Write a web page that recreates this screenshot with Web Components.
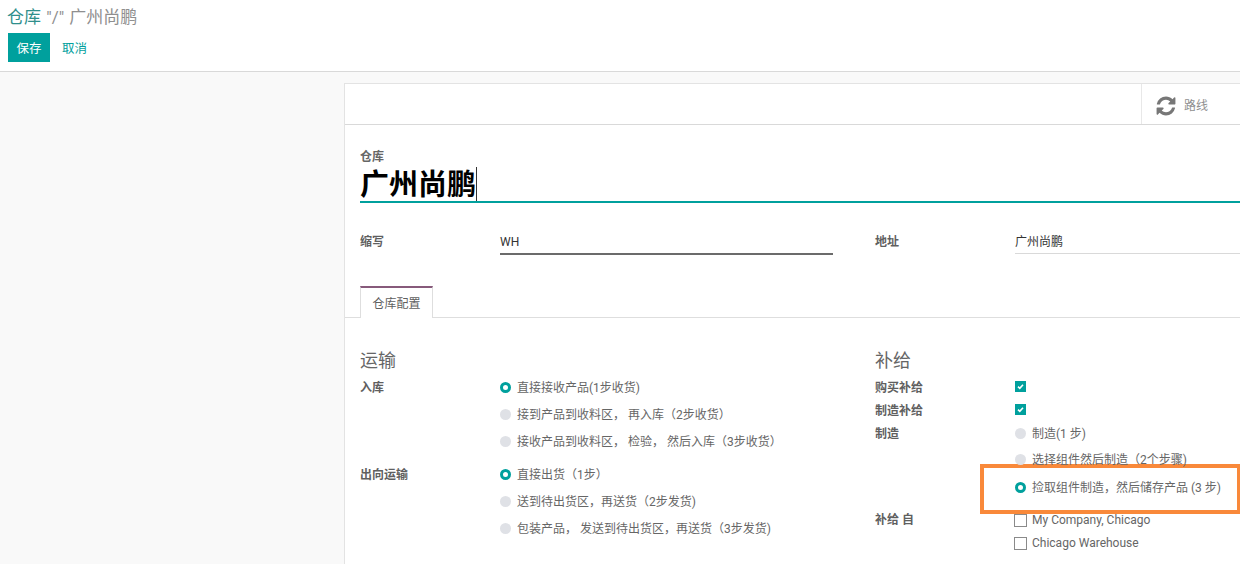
<!DOCTYPE html>
<html lang="zh">
<head>
<meta charset="utf-8">
<title>仓库</title>
<style>
	html, body { margin: 0; height: 564px; overflow: hidden; background: #f9f9f9; }
	body { font: 12px/18px Roboto, "Noto Sans CJK SC", sans-serif; color: #4c4c4c; }
</style>
</head>
<body>
<wh-panel>
	<span slot="crumb">仓库</span>
	<span slot="title">"/" 广州尚鹏</span>
</wh-panel>
<wh-sheet>
	<wh-name label="仓库" value="广州尚鹏"></wh-name>
	<wh-columns slot="fields" style="--top:24px">
		<wh-field label="缩写" value="WH" strong></wh-field>
		<wh-field slot="right" label="地址" value="广州尚鹏"></wh-field>
	</wh-columns>
	<wh-tab slot="tab">仓库配置</wh-tab>
	<wh-columns slot="config">
		<div>
			<wh-section>运输</wh-section>
			<wh-row label="入库" height="27"><wh-radio checked>直接接收产品(1步收货)</wh-radio></wh-row>
			<wh-row height="27"><wh-radio>接到产品到收料区， 再入库（2步收货）</wh-radio></wh-row>
			<wh-row height="33"><wh-radio>接收产品到收料区， 检验， 然后入库（3步收货）</wh-radio></wh-row>
			<wh-row label="出向运输" height="27"><wh-radio checked>直接出货（1步）</wh-radio></wh-row>
			<wh-row height="27"><wh-radio>送到待出货区，再送货（2步发货)</wh-radio></wh-row>
			<wh-row height="27"><wh-radio>包装产品， 发送到待出货区，再送货（3步发货)</wh-radio></wh-row>
		</div>
		<div slot="right">
			<wh-section>补给</wh-section>
			<wh-row label="购买补给" height="23"><wh-check checked></wh-check></wh-row>
			<wh-row label="制造补给" height="23"><wh-check checked></wh-check></wh-row>
			<wh-row label="制造" height="26"><wh-radio>制造(1 步)</wh-radio></wh-row>
			<wh-row height="28"><wh-radio>选择组件然后制造（2个步骤)</wh-radio></wh-row>
			<wh-row height="32" highlight><wh-radio checked>捡取组件制造，然后储存产品 (3 步)</wh-radio></wh-row>
			<wh-row label="补给 自" height="23"><wh-check>My Company, Chicago</wh-check></wh-row>
			<wh-row height="23"><wh-check>Chicago Warehouse</wh-check></wh-row>
		</div>
	</wh-columns>
</wh-sheet>

<script>
class Panel extends HTMLElement {
	constructor() {
		super();
		this.attachShadow({ mode: 'open' });
		this.shadowRoot.innerHTML = `
			<style>
			:host { display: block; box-sizing: border-box; height: 72px; background: #fff; border-bottom: 1px solid #d9d9d9; padding: 6px 8px 0 7px; }
			.title { font-size: 17px; line-height: 23px; color: #8f8f8f; word-spacing: 1px; }
			.crumb { color: #2f8f8c; }
			.buttons { display: flex; align-items: center; margin: 4px 0 0 1px; }
			button { font: inherit; font-size: 12.5px; border: 0; padding: 2px 0 0; background: none; color: #00a09d; }
			.save { width: 42px; height: 29px; background: #00a09d; color: #fff; }
			.cancel { margin-left: 12px; }
			</style>
			<div class="title"><span class="crumb"><slot name="crumb"></slot></span> <slot name="title"></slot></div>
			<div class="buttons"><button class="save">保存</button><button class="cancel">取消</button></div>
		`;
	}
}
customElements.define('wh-panel', Panel);

class Sheet extends HTMLElement {
	constructor() {
		super();
		this.attachShadow({ mode: 'open' });
		this.shadowRoot.innerHTML = `
			<style>
			:host { display: block; box-sizing: border-box; width: 896px; height: 481px; margin: 11px 0 0 344px; background: #fff; border: 1px solid #e3e3e3; border-width: 1px 0 0 1px; }
			.stats { display: flex; justify-content: flex-end; height: 40px; border-bottom: 1px solid #d9d9d9; }
			.stat { display: flex; align-items: center; gap: 7px; width: 99px; padding: 3px 0 0 13px; box-sizing: border-box; border-left: 1px solid #e8e8e8; color: #8f8f8f; }
			.body { padding: 25px 0 0 15px; }
			.tabs { display: flex; margin: 31px 0 0 -15px; padding-left: 15px; border-bottom: 1px solid #dedede; height: 31px; }
			.content { padding-top: 31px; }
			svg { display: block; }
			</style>
			<div class="stats">
				<div class="stat">
					<svg width="22" height="22" viewBox="0 0 1792 1792" fill="#777"><path d="M1639 1056q0 5-1 7-64 268-268 434.500t-478 166.500q-146 0-282.500-55t-243.500-157l-129 129q-19 19-45 19t-45-19-19-45v-448q0-26 19-45t45-19h448q26 0 45 19t19 45-19 45l-137 137q71 66 161 102t187 36q134 0 250-65t186-179q11-17 53-117 8-23 30-23h192q13 0 22.500 9.500t9.500 22.500zm25-800v448q0 26-19 45t-45 19h-448q-26 0-45-19t-19-45 19-45l138-138q-148-137-349-137-134 0-250 65t-186 179q-11 17-53 117-8 23-30 23h-199q-13 0-22.500-9.500t-9.500-22.500v-7q65-268 270-434.500t480-166.500q146 0 284 55.500t245 156.500l130-129q19-19 45-19t45 19 19 45z"/></svg>
					<span>路线</span>
				</div>
			</div>
			<div class="body">
				<slot></slot>
				<slot name="fields"></slot>
				<div class="tabs"><slot name="tab"></slot></div>
				<div class="content"><slot name="config"></slot></div>
			</div>
		`;
	}
}
customElements.define('wh-sheet', Sheet);

class Name extends HTMLElement {
	constructor() {
		super();
		this.attachShadow({ mode: 'open' });
		this.shadowRoot.innerHTML = `
			<style>
			:host { display: block; }
			.label { font-size: 12px; line-height: 15px; font-weight: 700; color: #666; }
			.value { height: 36px; border-bottom: 2px solid #00a09d; font-size: 29px; line-height: 40px; font-weight: 700; color: #000; }
			.caret { display: inline-block; width: 1px; height: 34px; background: #333; vertical-align: -6px; }
			</style>
			<div class="label">${this.getAttribute('label')}</div>
			<div class="value">${this.getAttribute('value')}<span class="caret"></span></div>
		`;
	}
}
customElements.define('wh-name', Name);

class Columns extends HTMLElement {
	constructor() {
		super();
		this.attachShadow({ mode: 'open' });
		this.shadowRoot.innerHTML = `
			<style>
			:host { display: grid; grid-template-columns: 473px 1fr; column-gap: 42px; margin-top: var(--top, 0); }
			</style>
			<div><slot></slot></div>
			<div><slot name="right"></slot></div>
		`;
	}
}
customElements.define('wh-columns', Columns);

class Field extends HTMLElement {
	constructor() {
		super();
		this.attachShadow({ mode: 'open' });
		const strong = this.hasAttribute('strong');
		const line = strong ? '2px solid #6b6b6b' : '1px solid #d9d9d9';
		this.shadowRoot.innerHTML = `
			<style>
			:host { display: grid; grid-template-columns: 140px 1fr; height: 28px; }
			.label { font-weight: 700; color: #5f5f5f; line-height: 30px; height: 28px; }
			.value { box-sizing: border-box; height: ${strong ? 28 : 27}px; padding-top: 6px; line-height: 18px; border-bottom: ${line}; color: #333; }
			</style>
			<div class="label">${this.getAttribute('label')}</div>
			<div class="value">${this.getAttribute('value')}</div>
		`;
	}
}
customElements.define('wh-field', Field);

class Tab extends HTMLElement {
	constructor() {
		super();
		this.attachShadow({ mode: 'open' });
		this.shadowRoot.innerHTML = `
			<style>
			:host { display: block; box-sizing: border-box; height: 32px; padding: 0 11.5px; background: #fff; border: 1px solid #dedede; border-top: 2px solid #875a7b; border-bottom: 0; line-height: 32px; color: #5f5f5f; }
			</style>
			<slot></slot>
		`;
	}
}
customElements.define('wh-tab', Tab);

class Section extends HTMLElement {
	constructor() {
		super();
		this.attachShadow({ mode: 'open' });
		this.shadowRoot.innerHTML = `
			<style>
			:host { display: block; height: 24px; font-size: 18px; line-height: 24px; color: #666; margin-bottom: 6px; }
			</style>
			<slot></slot>
		`;
	}
}
customElements.define('wh-section', Section);

class Row extends HTMLElement {
	constructor() {
		super();
		this.attachShadow({ mode: 'open' });
		const label = this.getAttribute('label') || '';
		const mark = this.hasAttribute('highlight') ? '<div class="mark"></div>' : '';
		this.shadowRoot.innerHTML = `
			<style>
			:host { display: grid; grid-template-columns: 140px 1fr; position: relative; height: ${this.getAttribute('height')}px; white-space: nowrap; }
			.label { font-weight: 700; color: #5f5f5f; line-height: 18px; }
			.value { position: relative; z-index: 1; }
			.mark { position: absolute; left: 105px; top: -15px; width: 260px; height: 50px; box-sizing: border-box; background: #fff; border: 4px solid #f9893a; border-right-width: 3px; }
			</style>
			${mark}
			<div class="label">${label}</div>
			<div class="value"><slot></slot></div>
		`;
	}
}
customElements.define('wh-row', Row);

class Radio extends HTMLElement {
	constructor() {
		super();
		this.attachShadow({ mode: 'open' });
		const dot = this.hasAttribute('checked')
			? 'background: #fff; border: 3.5px solid #00a09d;'
			: 'background: #dfe1e6; border: 0;';
		this.shadowRoot.innerHTML = `
			<style>
			:host { display: flex; align-items: center; gap: 6px; height: 18px; color: #666; }
			.dot { box-sizing: border-box; width: 11px; height: 11px; margin-top: -2px; border-radius: 50%; ${dot} }
			</style>
			<span class="dot"></span><slot></slot>
		`;
	}
}
customElements.define('wh-radio', Radio);

class Check extends HTMLElement {
	constructor() {
		super();
		this.attachShadow({ mode: 'open' });
		const box = this.hasAttribute('checked')
			? `<span class="box on"><svg width="11" height="11" viewBox="0 0 11 11" fill="none" stroke="#fff" stroke-width="1.6"><path d="M3 5.600 4.800 7.300 8 3.800"/></svg></span>`
			: `<span class="box"></span>`;
		this.shadowRoot.innerHTML = `
			<style>
			:host { display: flex; align-items: center; gap: 5px; height: 18px; color: #666; }
			.box { box-sizing: border-box; width: 13px; height: 13px; margin-left: -1px; border: 1px solid #8a8a8a; background: #fff; }
			.on { width: 11px; height: 11px; margin: -4px 0 0; border: 0; background: #00a09d; }
			svg { display: block; }
			</style>
			${box}<slot></slot>
		`;
	}
}
customElements.define('wh-check', Check);
</script>
</body>
</html>
